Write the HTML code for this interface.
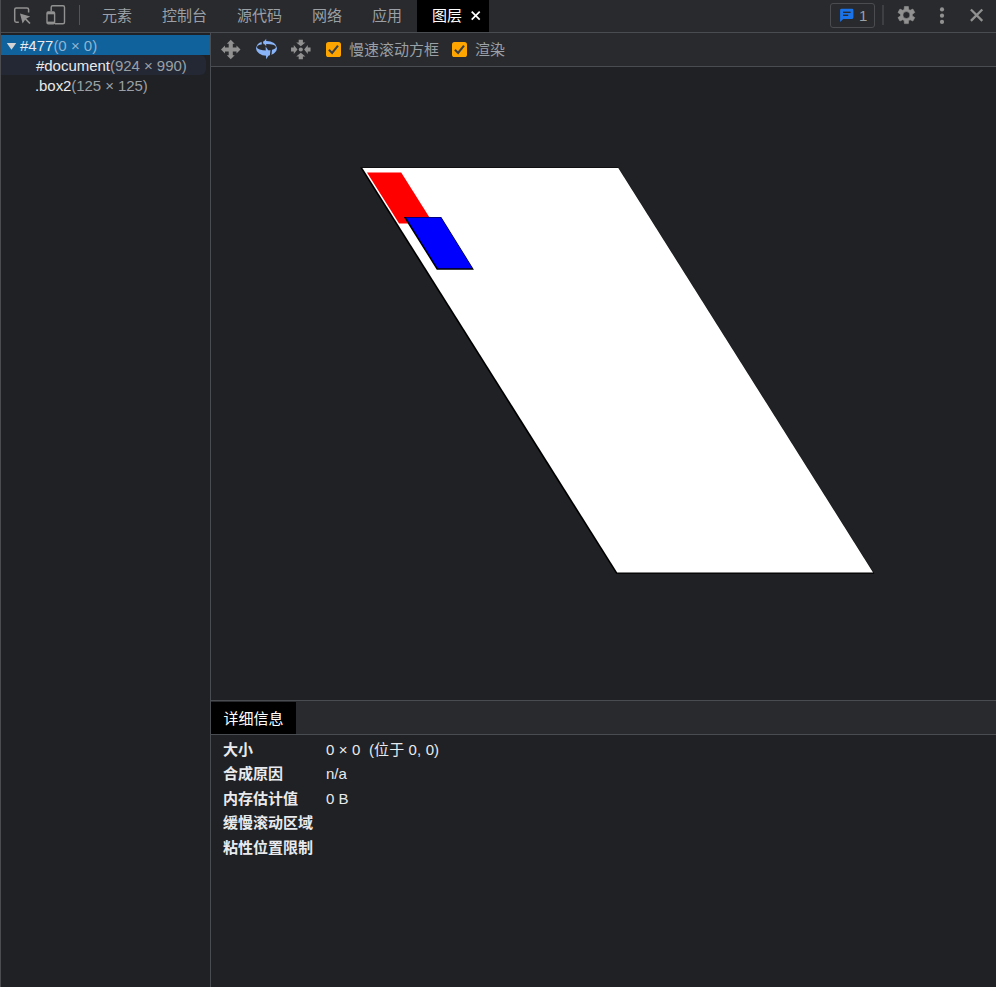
<!DOCTYPE html>
<html lang="zh-CN">
<head>
<meta charset="utf-8">
<title>DevTools - 图层</title>
<style>
*{box-sizing:border-box;margin:0;padding:0}
html,body{width:996px;height:987px;overflow:hidden;background:#202124}
body{position:relative;font-family:"Liberation Sans","Noto Sans CJK SC",sans-serif;font-size:15px;color:#e8eaed;line-height:20px}
.abs{position:absolute}
#leftedge{left:0;top:0;width:1px;height:987px;background:#4a4c50;z-index:10}
#tabbar{left:0;top:0;width:996px;height:32px;background:#292a2d}
#tabline{left:0;top:32px;width:996px;height:1px;background:#494c50}
.tab{position:absolute;top:0;height:32px;line-height:32px;color:#9aa0a6;font-size:15px;white-space:nowrap}
#seltab{left:417px;top:0;width:72px;height:32px;background:#000}
#sidebar{left:1px;top:33px;width:209px;height:954px;background:#202124}
#sideline{left:210px;top:33px;width:1px;height:954px;background:#494c50}
.row{position:absolute;left:0;height:20px;line-height:20px;white-space:nowrap;font-size:15px}
.dim{color:#9aa0a6}
#toolbar{left:211px;top:33px;width:785px;height:33px;background:#292a2d}
#toolline{left:211px;top:66px;width:785px;height:1px;background:#494c50}
#canvas{left:211px;top:67px;width:785px;height:633px;background:#202124}
#detailtop{left:211px;top:700px;width:785px;height:1px;background:#494c50}
#detailbar{left:211px;top:701px;width:785px;height:33px;background:#292a2d}
#detailline{left:211px;top:734px;width:785px;height:1px;background:#494c50}
#detailtab{left:211px;top:702px;width:85px;height:32px;background:#000;color:#fff;line-height:33px;text-align:center;font-size:15px}
.lbl{position:absolute;left:223px;font-weight:bold;color:#e8eaed;white-space:nowrap;font-size:15px;line-height:20px}
.val{position:absolute;left:326px;color:#e8eaed;white-space:nowrap;font-size:15px;line-height:20px}
</style>
</head>
<body>
<div class="abs" id="tabbar"></div>
<div class="abs" id="tabline"></div>
<div class="abs" id="seltab"></div>

<div class="tab" style="left:102px">元素</div>
<div class="tab" style="left:162px">控制台</div>
<div class="tab" style="left:237px">源代码</div>
<div class="tab" style="left:312px">网络</div>
<div class="tab" style="left:372px">应用</div>
<div class="tab" style="left:432px;color:#fff">图层</div>

<svg class="abs" id="topicons" style="left:0;top:0" width="996" height="33" viewBox="0 0 996 33">
  <!-- inspect -->
  <path d="M18.8 22.2 H16.3 a1.6 1.6 0 0 1 -1.6 -1.6 V9.5 a1.6 1.6 0 0 1 1.6 -1.6 H27 a1.6 1.6 0 0 1 1.6 1.6 V12.6" fill="none" stroke="#919191" stroke-width="1.5"/>
  <path d="M20 13.6 L30.2 16.6 L26.3 18.6 L30.6 22.9 L29.4 24.1 L25.1 19.8 L22.6 23.6 Z" fill="#919191"/>
  <!-- device -->
  <path d="M51.2 11.2 V7.2 a1.5 1.5 0 0 1 1.5 -1.5 H63 a1.5 1.5 0 0 1 1.5 1.5 V22.3 a1.5 1.5 0 0 1 -1.5 1.5 H55" fill="none" stroke="#919191" stroke-width="1.4"/>
  <rect x="47" y="11.9" width="7.6" height="12" rx="1.3" fill="none" stroke="#919191" stroke-width="1.4"/>
  <rect x="47" y="11.9" width="7.6" height="2.4" fill="#919191"/>
  <rect x="47" y="21.6" width="7.6" height="2.3" fill="#919191"/>
  <!-- divider -->
  <rect x="79" y="5" width="1" height="20" fill="#525458"/>
  <!-- tab close -->
  <path d="M471.7 11.7 L479.7 19.7 M479.7 11.7 L471.7 19.7" stroke="#fff" stroke-width="1.7" fill="none"/>
  <!-- issues counter -->
  <rect x="830.5" y="3.5" width="44" height="24" rx="2.5" fill="none" stroke="#4a4c50" stroke-width="1"/>
  <path d="M841.5 8.8 H852 a1.4 1.4 0 0 1 1.4 1.4 V17.6 a1.4 1.4 0 0 1 -1.4 1.4 H843.2 L840.1 22 V10.2 a1.4 1.4 0 0 1 1.4 -1.4 Z" fill="#1a73e8"/>
  <rect x="843" y="11.6" width="7.6" height="1.4" fill="#292a2d"/>
  <rect x="843" y="14.6" width="5.2" height="1.4" fill="#292a2d"/>
  <!-- divider2 -->
  <rect x="882.5" y="5" width="1" height="20" fill="#525458"/>
  <!-- dots -->
  <circle cx="942" cy="9.4" r="2.1" fill="#919191"/>
  <circle cx="942" cy="15.7" r="2.1" fill="#919191"/>
  <circle cx="942" cy="21.9" r="2.1" fill="#919191"/>
  <!-- close -->
  <path d="M970.9 9.5 L982.3 20.9 M982.3 9.5 L970.9 20.9" stroke="#919191" stroke-width="2.3" fill="none"/>
  <!-- gear -->
  <g transform="translate(906.4 15.05)" fill="#919191" stroke="#919191" stroke-width="0.6" stroke-linejoin="round"><path fill-rule="evenodd" d="M-2.25 -5.56 L-1.98 -8.57 L1.98 -8.57 L2.25 -5.56 L3.69 -4.73 L6.44 -6.00 L8.42 -2.57 L5.94 -0.84 L5.94 0.84 L8.42 2.57 L6.44 6.00 L3.69 4.73 L2.25 5.56 L1.98 8.57 L-1.98 8.57 L-2.25 5.56 L-3.69 4.73 L-6.44 6.00 L-8.42 2.57 L-5.94 0.84 L-5.94 -0.84 L-8.42 -2.57 L-6.44 -6.00 L-3.69 -4.73 Z M0 -3.50 A3.50 3.50 0 1 0 0 3.50 A3.50 3.50 0 1 0 0 -3.50 Z"/></g>
</svg>
<div class="tab" style="left:859px;color:#9aa0a6;top:0">1</div>
<div class="abs" id="sidebar">
  <div class="row" style="top:2px;width:209px;background:#10629d"><svg style="position:absolute;left:0;top:0" width="20" height="20"><path d="M5.8 7.9 H15.2 L10.5 14.8 Z" fill="#d4d4d4"/></svg><span style="position:absolute;left:19px;top:1px">#477<span style="color:#8fb4d1">(0 × 0)</span></span></div>
  <div class="row" style="top:22px;width:205px;background:#232834;border-radius:0 6px 6px 0"><span style="position:absolute;left:35px;top:1px;letter-spacing:-0.03px">#document<span class="dim">(924 × 990)</span></span></div>
  <div class="row" style="top:42px;width:209px"><span style="position:absolute;left:34px;top:1px;letter-spacing:-0.07px">.box2<span class="dim">(125 × 125)</span></span></div>
</div>
<div class="abs" id="sideline"></div>

<div class="abs" id="toolbar"></div>
<div class="abs" id="toolline"></div>
<div class="abs" id="canvas"></div>
<svg class="abs" id="tbicons" style="left:0;top:33px" width="996" height="34" viewBox="0 33 996 34">
  <path d="M230.75 39.75 L234.7 43.75 H232.8 V47.45 H236.5 V45.55 L240.5 49.5 L236.5 53.45 V51.55 H232.8 V55.25 H234.7 L230.75 59.25 L226.8 55.25 H228.7 V51.55 H225.0 V53.45 L221.0 49.5 L225.0 45.55 V47.45 H228.7 V43.75 H226.8 Z" fill="#919191"/>
  <g fill="#8ab4f8">
    <path fill-rule="evenodd" d="M256 48.3 a10.5 7.4 0 1 0 21 0 a10.5 7.4 0 1 0 -21 0 Z M256.9 47.2 a9.5 3.3 0 1 0 19 0 a9.5 3.3 0 1 0 -19 0 Z"/>
  </g>
  <path d="M262.2 40 L262.8 45.6" stroke="#292a2d" stroke-width="1.7"/>
  <path d="M271.4 48.6 L270.5 56.6" stroke="#292a2d" stroke-width="1.5"/>
  <path d="M263.1 42.6 L266.2 38.7 V46.3 Z" fill="#8ab4f8" stroke="#292a2d" stroke-width="0"/>
  <path d="M265.6 46.6 L266.2 59.2 L270.1 53.1 Z" fill="#8ab4f8"/>
  <path d="M298.7 39.75 H302.90000000000003 V42.5 H305.40000000000003 L300.8 46.2 L296.2 42.5 H298.7 Z M298.7 59.25 H302.90000000000003 V56.5 H305.40000000000003 L300.8 52.8 L296.2 56.5 H298.7 Z M291.05 47.4 V51.6 H293.8 V54.1 L297.5 49.5 L293.8 44.9 V47.4 Z M310.55 47.4 V51.6 H307.8 V54.1 L304.1 49.5 L307.8 44.9 V47.4 Z " fill="#919191"/>
  <circle cx="300.8" cy="49.5" r="2.05" fill="#919191"/>
  <rect x="326" y="42" width="15" height="15" rx="2.6" fill="#ffa500"/>
  <path d="M328.9 49.7 L332.1 52.9 L338 45.7" fill="none" stroke="#3c4043" stroke-width="2.1"/>
  <rect x="452" y="42" width="15" height="15" rx="2.6" fill="#ffa500"/>
  <path d="M454.9 49.7 L458.1 52.9 L464 45.7" fill="none" stroke="#3c4043" stroke-width="2.1"/>
</svg>
<div class="tab" style="left:349px;top:33px;height:33px;line-height:33px">慢速滚动方框</div>
<div class="tab" style="left:475px;top:33px;height:33px;line-height:33px">渲染</div>


<svg class="abs" id="scene" style="left:0;top:0" width="996" height="987" viewBox="0 0 996 987">
  <polygon points="362.4,168 618.3,168 873.1,572.4 617.2,572.4" fill="#000" stroke="#000" stroke-width="1.9" transform="translate(-0.5 0.5)"/>
  <polygon points="362.4,168 618.3,168 873.1,572.4 617.2,572.4" fill="#fff"/>
  <polygon points="367,172.5 401.2,172.5 433.3,223.5 399.1,223.5" fill="#f00"/>
  <polygon points="406,217.6 441,217.6 472.4,268.3 437.7,268.3" fill="#000" stroke="#000" stroke-width="2.1" transform="translate(-0.35 0.35)"/>
  <polygon points="406,217.6 441,217.6 472.4,268.3 437.7,268.3" fill="#00f"/>
</svg>
<div class="abs" id="detailtop"></div>
<div class="abs" id="detailbar"></div>
<div class="abs" id="detailline"></div>
<div class="abs" id="detailtab">详细信息</div>

<div class="lbl" style="top:740px">大小</div><div class="val" style="top:740px;letter-spacing:0.12px">0 × 0&nbsp; (位于 0, 0)</div>
<div class="lbl" style="top:764px">合成原因</div><div class="val" style="top:764px">n/a</div>
<div class="lbl" style="top:789px">内存估计值</div><div class="val" style="top:789px">0 B</div>
<div class="lbl" style="top:813px">缓慢滚动区域</div>
<div class="lbl" style="top:838px">粘性位置限制</div>

<div class="abs" id="leftedge"></div>
</body>
</html>
